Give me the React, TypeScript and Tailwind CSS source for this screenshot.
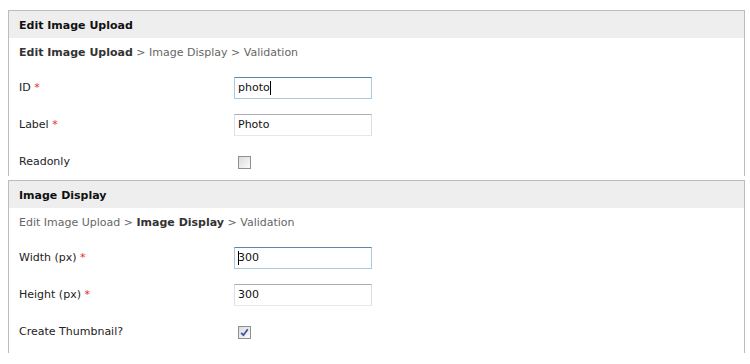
import type { ReactNode } from "react"

const STEPS = ["Edit Image Upload", "Image Display", "Validation"]

function Breadcrumb({ active }: { active: number }) {
  return (
    <div className="leading-[18px] text-[#666]">
      {STEPS.map((s, i) => (
        <span key={s}>
          {i > 0 && <span> &gt; </span>}
          <span className={i === active ? "font-bold text-[#333]" : ""}>{s}</span>
        </span>
      ))}
    </div>
  )
}

function TextField({ value, focused, caret }: { value: string; focused?: boolean; caret?: "start" | "end" }) {
  return (
    <div
      className={`w-[138px] h-[22px] border px-[3px] flex items-center text-[#111] bg-white ${
        focused
          ? "border-[#a8cbe4] border-t-[#5c86ae]"
          : "border-[#e3e9ef] border-t-[#abadb3] border-l-[#dbdfe6] border-r-[#dbdfe6]"
      }`}
    >
      {caret === "start" && <span className="inline-block w-px h-[14px] bg-black -mr-px" />}
      <span>{value}</span>
      {caret === "end" && <span className="inline-block w-px h-[14px] bg-black" />}
    </div>
  )
}

function Checkbox({ checked }: { checked?: boolean }) {
  return (
    <span className="ml-[4px] w-[13px] h-[13px] border border-[#8e8f8f] bg-gradient-to-br from-[#dcdcdc] to-[#fbfbfb] flex items-center justify-center">
      {checked && (
        <svg width="9" height="9" viewBox="0 0 9 9">
          <path d="M1.2 4.8 L3.4 7.2 L7.8 1.2" fill="none" stroke="#3a55a4" strokeWidth="1.8" />
        </svg>
      )}
    </span>
  )
}

function Row({ label, required, children }: { label: string; required?: boolean; children: ReactNode }) {
  return (
    <div className="grid grid-cols-[215px_1fr] items-center h-[22px]">
      <div className="text-[#222]">
        {label}
        {required && <span className="text-[#e8262b]"> *</span>}
      </div>
      <div className="flex items-center">{children}</div>
    </div>
  )
}

function Panel({ title, active, className, children }: { title: string; active: number; className: string; children: ReactNode }) {
  return (
    <div className={`w-[737px] ml-2 border-t border-x border-[#bcbcbc] ${className}`}>
      <div className="h-[27px] bg-[#eeeeee] pl-[10px] pt-[3px] flex items-center font-bold text-[#111]">{title}</div>
      <div className="pl-[10px] pt-[6px]">
        <Breadcrumb active={active} />
        <div className="mt-[15px] flex flex-col gap-[15px]">{children}</div>
      </div>
    </div>
  )
}

export default function App() {
  return (
    <div className="w-[750px] h-[364px] bg-white text-[11px] overflow-hidden" style={{ fontFamily: '"DejaVu Sans", Verdana, sans-serif' }}>
      <Panel title="Edit Image Upload" active={0} className="mt-[10px] pb-[3px]">
        <Row label="ID" required>
          <TextField value="photo" focused caret="end" />
        </Row>
        <Row label="Label" required>
          <TextField value="Photo" />
        </Row>
        <Row label="Readonly">
          <Checkbox />
        </Row>
      </Panel>
      <Panel title="Image Display" active={1} className="mt-[4px] pb-[10px]">
        <Row label="Width (px)" required>
          <TextField value="300" focused caret="start" />
        </Row>
        <Row label="Height (px)" required>
          <TextField value="300" />
        </Row>
        <Row label="Create Thumbnail?">
          <Checkbox checked />
        </Row>
      </Panel>
    </div>
  )
}
